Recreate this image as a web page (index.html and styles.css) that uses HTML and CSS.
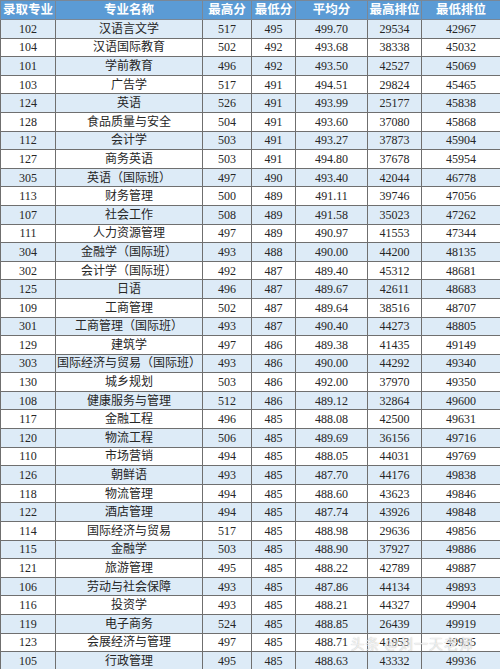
FILE: index.html
```html
<!DOCTYPE html>
<html lang="zh">
<head>
<meta charset="utf-8">
<title>录取分数</title>
<link rel="stylesheet" href="styles.css">
</head>
<body>
<div class="wrap">
<table class="score">
<colgroup>
<col class="c1"><col class="c2"><col class="c3"><col class="c4"><col class="c5"><col class="c6"><col class="c7">
</colgroup>
<thead>
<tr><th>录取专业</th><th>专业名称</th><th>最高分</th><th>最低分</th><th>平均分</th><th>最高排位</th><th>最低排位</th></tr>
</thead>
<tbody>
<tr><td>102</td><td>汉语言文学</td><td>517</td><td>495</td><td>499.70</td><td>29534</td><td>42967</td></tr>
<tr><td>104</td><td>汉语国际教育</td><td>502</td><td>492</td><td>493.68</td><td>38338</td><td>45032</td></tr>
<tr><td>101</td><td>学前教育</td><td>496</td><td>492</td><td>493.50</td><td>42527</td><td>45069</td></tr>
<tr><td>103</td><td>广告学</td><td>517</td><td>491</td><td>494.51</td><td>29824</td><td>45465</td></tr>
<tr><td>124</td><td>英语</td><td>526</td><td>491</td><td>493.99</td><td>25177</td><td>45838</td></tr>
<tr><td>128</td><td>食品质量与安全</td><td>504</td><td>491</td><td>493.60</td><td>37080</td><td>45868</td></tr>
<tr><td>112</td><td>会计学</td><td>503</td><td>491</td><td>493.27</td><td>37873</td><td>45904</td></tr>
<tr><td>127</td><td>商务英语</td><td>503</td><td>491</td><td>494.80</td><td>37678</td><td>45954</td></tr>
<tr><td>305</td><td>英语（国际班）</td><td>497</td><td>490</td><td>493.40</td><td>42044</td><td>46778</td></tr>
<tr><td>113</td><td>财务管理</td><td>500</td><td>489</td><td>491.11</td><td>39746</td><td>47056</td></tr>
<tr><td>107</td><td>社会工作</td><td>508</td><td>489</td><td>491.58</td><td>35023</td><td>47262</td></tr>
<tr><td>111</td><td>人力资源管理</td><td>497</td><td>489</td><td>490.97</td><td>41553</td><td>47344</td></tr>
<tr><td>304</td><td>金融学（国际班）</td><td>493</td><td>488</td><td>490.00</td><td>44200</td><td>48135</td></tr>
<tr><td>302</td><td>会计学（国际班）</td><td>492</td><td>487</td><td>489.40</td><td>45312</td><td>48681</td></tr>
<tr><td>125</td><td>日语</td><td>496</td><td>487</td><td>489.67</td><td>42611</td><td>48683</td></tr>
<tr><td>109</td><td>工商管理</td><td>502</td><td>487</td><td>489.64</td><td>38516</td><td>48707</td></tr>
<tr><td>301</td><td>工商管理（国际班）</td><td>493</td><td>487</td><td>490.40</td><td>44273</td><td>48805</td></tr>
<tr><td>129</td><td>建筑学</td><td>497</td><td>486</td><td>489.38</td><td>41435</td><td>49149</td></tr>
<tr><td>303</td><td>国际经济与贸易（国际班）</td><td>493</td><td>486</td><td>490.00</td><td>44292</td><td>49340</td></tr>
<tr><td>130</td><td>城乡规划</td><td>503</td><td>486</td><td>492.00</td><td>37970</td><td>49350</td></tr>
<tr><td>108</td><td>健康服务与管理</td><td>512</td><td>486</td><td>489.12</td><td>32864</td><td>49600</td></tr>
<tr><td>117</td><td>金融工程</td><td>496</td><td>485</td><td>488.08</td><td>42500</td><td>49631</td></tr>
<tr><td>120</td><td>物流工程</td><td>506</td><td>485</td><td>489.69</td><td>36156</td><td>49716</td></tr>
<tr><td>110</td><td>市场营销</td><td>494</td><td>485</td><td>488.05</td><td>44031</td><td>49769</td></tr>
<tr><td>126</td><td>朝鲜语</td><td>493</td><td>485</td><td>487.70</td><td>44176</td><td>49838</td></tr>
<tr><td>118</td><td>物流管理</td><td>494</td><td>485</td><td>488.60</td><td>43623</td><td>49846</td></tr>
<tr><td>122</td><td>酒店管理</td><td>494</td><td>485</td><td>487.74</td><td>43926</td><td>49848</td></tr>
<tr><td>114</td><td>国际经济与贸易</td><td>517</td><td>485</td><td>488.98</td><td>29636</td><td>49856</td></tr>
<tr><td>115</td><td>金融学</td><td>503</td><td>485</td><td>488.90</td><td>37927</td><td>49886</td></tr>
<tr><td>121</td><td>旅游管理</td><td>495</td><td>485</td><td>488.22</td><td>42789</td><td>49887</td></tr>
<tr><td>106</td><td>劳动与社会保障</td><td>493</td><td>485</td><td>487.86</td><td>44134</td><td>49893</td></tr>
<tr><td>116</td><td>投资学</td><td>493</td><td>485</td><td>488.21</td><td>44327</td><td>49904</td></tr>
<tr><td>119</td><td>电子商务</td><td>524</td><td>485</td><td>488.85</td><td>26439</td><td>49919</td></tr>
<tr><td>123</td><td>会展经济与管理</td><td>497</td><td>485</td><td>488.71</td><td>41953</td><td>49935</td></tr>
<tr><td>105</td><td>行政管理</td><td>495</td><td>485</td><td>488.63</td><td>43332</td><td>49936</td></tr>
</tbody>
</table>
<div class="watermark">头条 @刘一天老师</div>
</div>
</body>
</html>
```
FILE: styles.css
```css
html, body {
  margin: 0;
  padding: 0;
  background: #ffffff;
}
.wrap {
  position: relative;
  width: 500px;
  height: 669px;
  overflow: hidden;
}
.score {
  width: 500px;
  border-collapse: collapse;
  table-layout: fixed;
  font-family: "Liberation Serif", "Noto Sans CJK SC", serif;
  font-size: 12px;
  color: #262626;
}
.c1 { width: 55px; }
.c2 { width: 147px; }
.c3 { width: 49px; }
.c4 { width: 44px; }
.c5 { width: 72px; }
.c6 { width: 54px; }
.c7 { width: 79px; }
.score th {
  height: 18px;
  background: #5b9bd5;
  color: #ffffff;
  font-weight: bold;
  font-size: 12.5px;
  padding: 0;
  border: 1px solid #7a8796;
  text-align: center;
  line-height: 16px;
  font-family: "Liberation Serif", "Noto Sans CJK SC", serif;
}
.score td {
  height: 17.6px;
  padding: 0;
  border: 1px solid #6f6f6f;
  text-align: center;
  line-height: 16px;
  white-space: nowrap;
}
.score tbody tr:nth-child(odd) td {
  background: #ddebf7;
}
.score tbody tr:nth-child(even) td {
  background: #ffffff;
}
.watermark {
  position: absolute;
  right: 26px;
  bottom: 16px;
  font-family: "Noto Sans CJK SC", sans-serif;
  font-size: 14px;
  color: rgba(255, 255, 255, 0.75);
  text-shadow: 0 0 1px rgba(120, 120, 120, 0.6);
  letter-spacing: 1px;
}
```
